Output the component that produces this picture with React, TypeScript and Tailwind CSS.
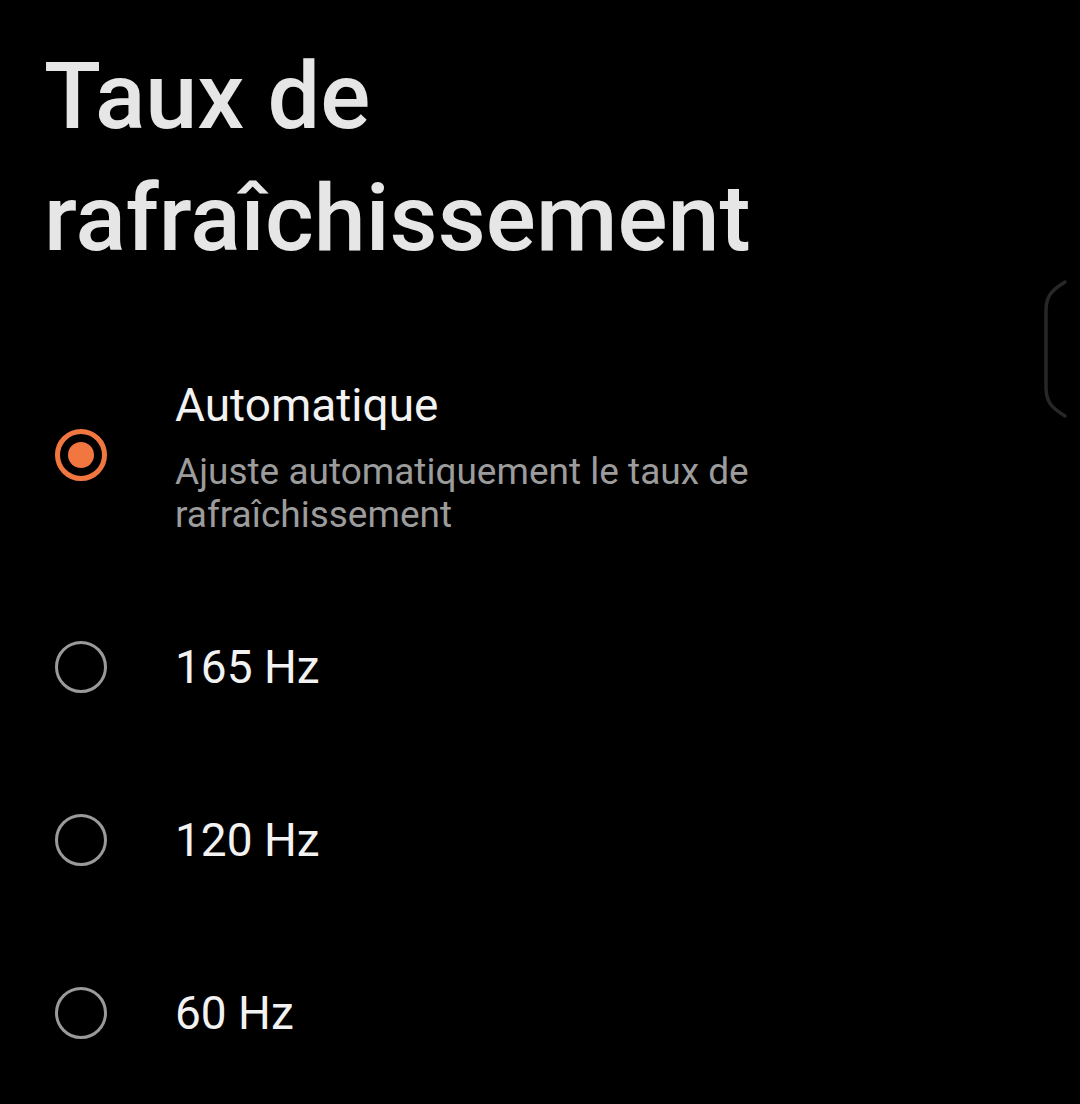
import React from "react";

const font = { fontFamily: "Roboto, 'Noto Sans', sans-serif" };

function Radio({ checked }: { checked: boolean }) {
  if (checked) {
    return (
      <div className="w-[52px] h-[52px] rounded-full border-[5px] border-[#f2763f] flex items-center justify-center shrink-0">
        <div className="w-[26px] h-[26px] rounded-full bg-[#f2763f]" />
      </div>
    );
  }
  return <div className="w-[52px] h-[52px] rounded-full border-[3px] border-[#9a9a9a] shrink-0" />;
}

export default function App() {
  return (
    <div className="relative w-[1080px] h-[1104px] bg-black overflow-hidden" style={font}>
      <h1 className="pl-[44px] pt-[35px] text-[93.5px] leading-[122px] text-[#e6e6e6] font-medium">
        Taux de
        <br />
        rafraîchissement
      </h1>
      <div className="mt-[50px] flex flex-col">
        <div className="h-[251px] flex items-center pl-[55px]">
          <Radio checked />
          <div className="ml-[68px] mt-[4px] flex flex-col">
            <div className="text-[46px] leading-[56px] text-[#f2f2f2]">Automatique</div>
            <div className="mt-[17px] text-[37px] leading-[43px] text-[#9c9c9c] w-[620px]">
              Ajuste automatiquement le taux de rafraîchissement
            </div>
          </div>
        </div>
        {["165 Hz", "120 Hz", "60 Hz"].map((t) => (
          <div key={t} className="h-[173px] flex items-center pl-[55px]">
            <Radio checked={false} />
            <div className="ml-[68px] text-[46px] leading-[56px] text-[#f2f2f2]">{t}</div>
          </div>
        ))}
      </div>
      <svg className="absolute left-[1040px] top-[278px]" width="40" height="142" viewBox="0 0 40 142">
        <path d="M25 4 C 12 12, 6 18, 6 32 L 6 110 C 6 124, 12 130, 25 138" fill="none" stroke="#272727" strokeWidth="3.5" strokeLinecap="round" />
      </svg>
    </div>
  );
}
